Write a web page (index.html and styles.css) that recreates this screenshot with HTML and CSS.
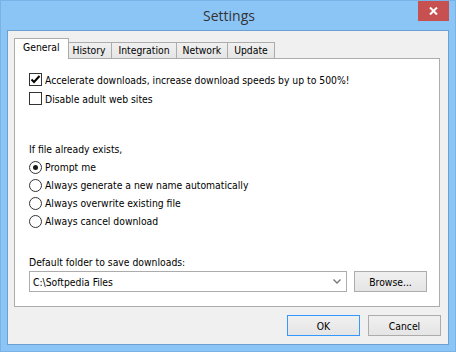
FILE: index.html
```html
<!DOCTYPE html>
<html lang="en">
<head>
  <meta charset="UTF-8">
  <title>Settings</title>
  <link rel="stylesheet" href="styles.css">
</head>
<body>

  <div class="window">
    <div class="titlebar">
      <span></span>
      <span class="title">Settings</span>
      <button class="close-btn" aria-label="Close">
        <svg width="9" height="8" viewBox="0 0 9 8"><path d="M1 0.5 L8 7.5 M8 0.5 L1 7.5" stroke="#fff" stroke-width="2"/></svg>
      </button>
    </div>

    <div class="client">
      <div class="tabs">
        <div class="tab active">General</div>
        <div class="tab">History</div>
        <div class="tab">Integration</div>
        <div class="tab">Network</div>
        <div class="tab">Update</div>
      </div>

      <div class="panel">
        <label class="check">
          <span class="box"><svg width="11" height="11" viewBox="0 0 11 11"><path d="M1.5 5.5 L4 8 L9.5 2" fill="none" stroke="#000" stroke-width="2"/></svg></span>
          Accelerate downloads, increase download speeds by up to 500%!
        </label>
        <label class="check">
          <span class="box"></span>
          Disable adult web sites
        </label>

        <div class="group-label">If file already exists,</div>
        <label class="radio"><span class="dot checked"></span>Prompt me</label>
        <label class="radio"><span class="dot"></span>Always generate a new name automatically</label>
        <label class="radio"><span class="dot"></span>Always overwrite existing file</label>
        <label class="radio"><span class="dot"></span>Always cancel download</label>

        <div class="folder-label">Default folder to save downloads:</div>
        <div class="folder-row">
          <div class="combo">
            <span>C:\Softpedia Files</span>
            <svg width="8" height="5" viewBox="0 0 8 5"><path d="M0.5 0.5 L4 4 L7.5 0.5" fill="none" stroke="#777" stroke-width="1.4"/></svg>
          </div>
          <button class="btn browse">Browse...</button>
        </div>
      </div>

      <div class="actions">
        <button class="btn default">OK</button>
        <button class="btn">Cancel</button>
      </div>
    </div>
  </div>

</body>
</html>
```

FILE: styles.css
```css
body {
  margin: 0;
  font-family: "DejaVu Sans Condensed", "DejaVu Sans", sans-serif;
  font-size: 10.3px;
  color: #000;
  background: #fff;
}

.window {
  width: 456px;
  height: 352px;
  box-sizing: border-box;
  border: 1px solid #79b2e7;
  background: #8bc5f6;
}

.titlebar {
  display: grid;
  grid-template-columns: 1fr auto 1fr;
  height: 29px;
}

.title {
  align-self: center;
  font-family: "Open Sans", sans-serif;
  font-size: 14px;
  color: #333;
  padding: 0 0 1px 2px;
}

.close-btn {
  justify-self: end;
  align-self: start;
  width: 31px;
  height: 20px;
  margin-right: 6px;
  padding: 0;
  border: none;
  background: #c75050;
  display: flex;
  align-items: center;
  justify-content: center;
}

.client {
  margin: 0 6px;
  height: 315px;
  box-sizing: border-box;
  border: 1px solid #6c9fd2;
  background: #f0f0f0;
}

.tabs {
  display: flex;
  align-items: flex-end;
  height: 20px;
  margin-top: 7px;
  padding-left: 8px;
}

.tab {
  border: 1px solid #acacac;
  border-bottom: none;
  margin-left: -1px;
  padding: 0 6px 1px;
  line-height: 14px;
  background: linear-gradient(#f0f0f0, #e5e5e5);
}

.tab:first-child {
  margin-left: 0;
}

.tab.active {
  position: relative;
  z-index: 1;
  margin: 0 -2px -1px -2px;
  padding: 1px 8px 5px;
  background: #fff;
}

.panel {
  margin: 0 8px 0 6px;
  border: 1px solid #acacac;
  background: #fff;
  padding: 11px 0 14px 14px;
}

.check,
.radio {
  display: flex;
  align-items: center;
  gap: 3px;
}

.check {
  height: 19px;
}

.radio {
  height: 18px;
}

.box {
  width: 13px;
  height: 13px;
  box-sizing: border-box;
  border: 1px solid #333;
  background: #fff;
  display: flex;
  align-items: center;
  justify-content: center;
}

.dot {
  width: 13px;
  height: 13px;
  box-sizing: border-box;
  border: 1px solid #333;
  border-radius: 50%;
  background: #fff;
  display: flex;
  align-items: center;
  justify-content: center;
}

.dot.checked::after {
  content: "";
  width: 5px;
  height: 5px;
  border-radius: 50%;
  background: #1a1a1a;
}

.group-label {
  margin-top: 32px;
  height: 18px;
  line-height: 18px;
}

.folder-label {
  margin-top: 23px;
  height: 18px;
  line-height: 18px;
}

.folder-row {
  display: flex;
  gap: 7px;
}

.combo {
  width: 318px;
  height: 21px;
  box-sizing: border-box;
  border: 1px solid #acacac;
  background: #fff;
  display: flex;
  align-items: center;
  justify-content: space-between;
  padding: 0 5px 0 3px;
}

.btn {
  width: 73px;
  height: 21px;
  padding: 0;
  border: 1px solid #acacac;
  background: linear-gradient(#f0f0f0, #e5e5e5);
  font-family: inherit;
  font-size: 10.3px;
  color: #000;
}

.btn.default {
  border-color: #3399ff;
}

.actions {
  display: flex;
  justify-content: flex-end;
  gap: 8px;
  padding: 8px 7px 0 0;
}
```
